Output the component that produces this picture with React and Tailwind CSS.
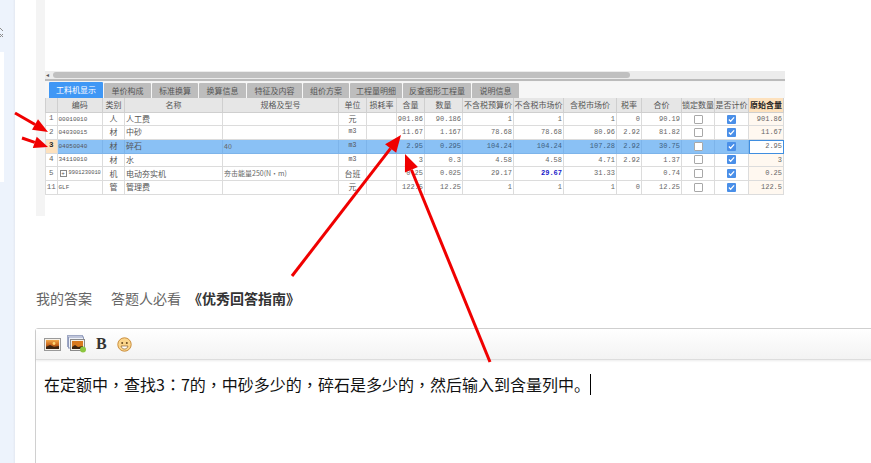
const cjk = { fontFamily: '"Noto Sans CJK SC", sans-serif' };
const tc = { fontFamily: '"Noto Sans CJK TC", sans-serif' };
const mono = { fontFamily: '"Liberation Mono", "Noto Sans CJK SC", monospace' };

const cols = "grid-cols-[12.5px_45.5px_22px_98px_116px_28px_30px_28px_38px_51px_50px_53px_25px_40px_33px_34px_35px]";

const tabs = ["单价构成", "标准换算", "换算信息", "特征及内容", "组价方案", "工程量明细", "反查图形工程量", "说明信息"];
const tabW = ["w-[47px]", "w-[46px]", "w-[47px]", "w-[55px]", "w-[46px]", "w-[52px]", "w-[68px]", "w-[47px]"];
const headers = ["", "编码", "类别", "名称", "规格及型号", "单位", "损耗率", "含量", "数量", "不含税预算价", "不含税市场价", "含税市场价", "税率", "合价", "锁定数量", "是否计价", "原始含量"];

const rows = [
  { no: "1", code: "00010010", type: "人", name: "人工费", spec: "", unit: "元", vals: ["", "901.86", "90.186", "1", "1", "1", "0", "90.19"], orig: "901.86", h: "h-[13px]" },
  { no: "2", code: "04030015", type: "材", name: "中砂", spec: "", unit: "m3", vals: ["", "11.67", "1.167", "78.68", "78.68", "80.96", "2.92", "81.82"], orig: "11.67", h: "h-[13.5px]" },
  { no: "3", code: "04050040", type: "材", name: "碎石", spec: "40", unit: "m3", vals: ["", "2.95", "0.295", "104.24", "104.24", "107.28", "2.92", "30.75"], orig: "2.95", h: "h-[14px]", sel: true },
  { no: "4", code: "34110010", type: "材", name: "水", spec: "", unit: "m3", vals: ["", "3", "0.3", "4.58", "4.58", "4.71", "2.92", "1.37"], orig: "3", h: "h-[13.5px]" },
  { no: "5", code: "9901230010", plus: true, type: "机", name: "电动夯实机", spec: "夯击能量250(N·m)", unit: "台班", vals: ["", "0.25", "0.025", "29.17", "29.67", "31.33", "", "0.74"], orig: "0.25", h: "h-[14px]" },
  { no: "11", code: "GLF", type: "管", name: "管理费", spec: "", unit: "元", vals: ["", "122.5", "12.25", "1", "1", "1", "0", "12.25"], orig: "122.5", h: "h-[13.5px]" },
];

function Check({ on }) {
  if (on)
    return (
      <span className="w-[9px] h-[9px] rounded-[1px] bg-[#4a8fe8] flex items-center justify-center">
        <svg width="7" height="7" viewBox="0 0 8 8"><path d="M1 4l2 2 4-4.5" fill="none" stroke="#fff" strokeWidth="1.4" /></svg>
      </span>
    );
  return <span className="w-[9px] h-[9px] rounded-[1px] border border-[#a8a8a8] bg-white" />;
}

function Row({ r }) {
  const line = r.sel ? "border-[#7db4ea]" : "border-[#dcdcdc]";
  const cell = `border-r border-b ${line} flex items-center overflow-hidden whitespace-nowrap`;
  const num = `${cell} justify-end pr-[1px] text-[7px] ${r.sel ? "text-[#3f5f80]" : "text-[#666]"}`;
  return (
    <div className={`grid ${cols} ${r.h} ${r.sel ? "bg-[#8ac1f5]" : "bg-white"}`}>
      <div className={`${cell} justify-center text-[7.5px] border-l ${r.sel ? "bg-[#fde1bd] text-[#222] font-bold border-[#dcdcdc]" : "bg-white text-[#666]"}`} style={mono}>{r.no}</div>
      <div className={`${cell} pl-[1px] gap-[2px] text-[#555] ${r.plus ? "text-[5.4px]" : "text-[6px]"}`} style={mono}>
        {r.plus && <span className="w-[7px] h-[7px] border border-[#888] flex items-center justify-center text-[6px] leading-none shrink-0 ml-[1px]">+</span>}
        {r.code}
      </div>
      <div className={`${cell} justify-center text-[8px] text-[#555]`} style={cjk}>{r.type}</div>
      <div className={`${cell} pl-[1px] text-[8px] text-[#555]`} style={cjk}>{r.name}</div>
      <div className={`${cell} pl-[1px] text-[7px] text-[#666]`} style={cjk}>{r.spec}</div>
      <div className={`${cell} justify-center text-[#555] ${r.unit === "m3" ? "text-[6.5px]" : "text-[8px]"}`} style={r.unit === "m3" ? mono : cjk}>{r.unit}</div>
      {r.vals.map((v, i) => (
        <div key={i} className={`${num} ${v === "29.67" ? "!text-[#1616c8] font-bold" : ""}`} style={mono}>{v}</div>
      ))}
      <div className={`${cell} justify-center`}><Check /></div>
      <div className={`${cell} justify-center`}><Check on /></div>
      <div
        className={`flex items-center justify-end pr-[1px] text-[7px] text-[#666] whitespace-nowrap overflow-hidden ${
          r.sel ? "bg-white border border-[#3f8ee0]" : "bg-[#fff8f0] border-r border-b border-[#dcdcdc]"
        }`}
        style={mono}
      >
        {r.orig}
      </div>
    </div>
  );
}

function Picture() {
  return (
    <svg width="17" height="13" viewBox="0 0 17 13">
      <defs>
        <linearGradient id="ph" x1="0" y1="0" x2="0" y2="1">
          <stop offset="0" stopColor="#f3a94a" />
          <stop offset="0.55" stopColor="#c9651a" />
          <stop offset="1" stopColor="#5b2e12" />
        </linearGradient>
      </defs>
      <rect x="0.5" y="0.5" width="16" height="12" fill="#f5f0e8" stroke="#9a9a9a" />
      <rect x="2" y="2" width="13" height="9" fill="url(#ph)" />
      <path d="M2 9l4-2 4 2 5-1v3H2z" fill="#3d2412" />
      <circle cx="10" cy="5.500" r="1.400" fill="#ffd977" />
    </svg>
  );
}

function Gallery() {
  return (
    <svg width="20" height="18" viewBox="0 0 20 18">
      <rect x="0.5" y="0.5" width="15" height="11" fill="#eef1f8" stroke="#9fa8c4" />
      <rect x="1.5" y="2" width="15" height="11" fill="#eef1f8" stroke="#8f9abb" />
      <rect x="3.5" y="4.500" width="14" height="11" fill="#f5f0e8" stroke="#8a8a8a" />
      <rect x="5" y="6" width="11" height="8" fill="#d9791f" />
      <path d="M5 12l3-2 3 2 5-1v3H5z" fill="#3d2412" />
      <circle cx="16" cy="14.500" r="3" fill="#8cc63f" />
    </svg>
  );
}

function Smile() {
  return (
    <svg width="15" height="15" viewBox="0 0 15 15">
      <circle cx="7.5" cy="7.5" r="6.700" fill="#fbd58b" stroke="#c98e3f" />
      <circle cx="5.2" cy="6" r="1" fill="#6b4a1e" />
      <circle cx="9.8" cy="6" r="1" fill="#6b4a1e" />
      <path d="M4 9h7c-.5 2-2 3-3.500 3S4.500 11 4 9z" fill="#fff" stroke="#8a5f28" strokeWidth="0.7" />
    </svg>
  );
}

function Arrow({ x1, y1, x2, y2, w = 3, head = 16, hw = 7 }) {
  const dx = x2 - x1, dy = y2 - y1, l = Math.hypot(dx, dy), ux = dx / l, uy = dy / l;
  const bx = x2 - ux * head, by = y2 - uy * head;
  const nx = -uy * hw, ny = ux * hw;
  return (
    <g>
      <line x1={x1} y1={y1} x2={bx} y2={by} stroke="#f00000" strokeWidth={w} />
      <polygon points={`${x2},${y2} ${bx + nx},${by + ny} ${bx - nx},${by - ny}`} fill="#f00000" />
    </g>
  );
}

function P({ children }) {
  return <span style={tc}>{children}</span>;
}

export default function App() {
  return (
    <div className="relative w-[871px] h-[463px] overflow-hidden bg-white flex" style={cjk}>
      {/* left page gutter */}
      <div className="w-[15px] h-full bg-[linear-gradient(90deg,#edf3fc_85%,#e4e9f2)] shrink-0 pt-[27px]">
        <svg className="block" width="4" height="11" viewBox="0 0 4 11">
          <path d="M0 1l3 3M0 7l3 3M3 7l-3 3" fill="none" stroke="#8c8c8c" strokeWidth="1" />
        </svg>
        <div className="w-[4px] h-[130px] bg-white mt-[14px]" />
      </div>

      <div className="flex-1 min-w-0 pl-[20px] flex flex-col">
        {/* pasted screenshot */}
        <div className="h-[216px] w-[750px] shrink-0 flex pl-[1px]">
          <div className="w-[9px] bg-[#f4f4f4] shrink-0" />
          <div className="w-[740px] bg-white flex flex-col pt-[71px]">
            {/* scrollbar */}
            <div className="h-[8px] w-[740px] bg-[#ececec] flex items-center pl-[1px]">
              <span className="text-[6px] leading-none text-[#555] w-[7px]">◂</span>
              <div className="h-[6px] w-[577px] rounded-[3px] bg-[#c0c0c0]" />
            </div>
            <div className="h-[3px] bg-[#bbbbbb] w-[740px] border-b border-[#f4f4f4]" />
            {/* tabs */}
            <div className="h-[16px] flex gap-[1px] items-end w-[740px] bg-[#f6f6f6] pl-[4px]">
              <div className="h-[16px] w-[54px] bg-[#3f97f5] text-white text-[8px] flex items-center justify-center rounded-t-[1px]">工料机显示</div>
              {tabs.map((t, i) => (
                <div key={t} className={`h-[15px] ${tabW[i]} bg-[#bdbdbd] text-[#555] text-[8px] flex items-center justify-center rounded-t-[1px] whitespace-nowrap`}>{t}</div>
              ))}
            </div>
            {/* header */}
            <div className={`grid ${cols} h-[15px] bg-[#e6e6e6] w-[739px]`}>
              {headers.map((h, i) => (
                <div
                  key={i}
                  className={`border-r border-b border-[#cfcfcf] flex items-center justify-center text-[8px] whitespace-nowrap overflow-hidden ${
                    i === 0 ? "border-l" : ""
                  } ${i === 16 ? "bg-[#fde1bd] text-[#222] font-bold" : "text-[#555]"}`}
                >
                  {h}
                </div>
              ))}
            </div>
            <div className="w-[739px]">
              {rows.map((r) => <Row key={r.no} r={r} />)}
            </div>
          </div>
        </div>

        {/* tip line */}
        <div className="mt-[73px] h-[18px] shrink-0 flex items-center text-[14px] text-[#666] whitespace-nowrap pl-[1px]">
          <span>我的答案</span>
          <span className="ml-[19px]">答题人必看</span>
          <span className="ml-[7px] text-[#333] font-bold">《优秀回答指南》</span>
        </div>

        {/* editor */}
        <div className="mt-[21px] w-[880px] h-[220px] shrink-0 rounded-t-[3px] border border-[#d0d0d0]">
          <div className="h-[31px] bg-[linear-gradient(180deg,#ffffff,#f3f3f3)] border-b border-[#dddddd] shadow-[0_1px_2px_rgba(0,0,0,0.08)] flex items-center pl-[8px]">
            <Picture />
            <span className="ml-[6px]"><Gallery /></span>
            <span className="ml-[9px] text-[16px] font-bold text-[#333] leading-none" style={{ fontFamily: '"Liberation Serif", serif' }}>B</span>
            <span className="ml-[10px]"><Smile /></span>
          </div>
          <div className="pl-[8px] pt-[13px] text-[16px] leading-[22px] text-[#111] flex items-center whitespace-nowrap">
            <span>
              在定额中<P>，</P>查找3<P>：</P>7的<P>，</P>中砂多少的<P>，</P>碎石是多少的<P>，</P>然后输入到含量列中。
            </span>
            <span className="inline-block w-[1px] h-[21px] bg-black" />
          </div>
        </div>
      </div>

      {/* annotation arrows */}
      <svg className="absolute left-0 top-0 pointer-events-none" width="871" height="463">
        <Arrow x1={15} y1={113} x2={48} y2={132} w={3} head={15} hw={6} />
        <Arrow x1={22} y1={138} x2={48} y2={147} w={3} head={14} hw={6} />
        <Arrow x1={292} y1={276} x2={401} y2={135} w={3} head={17} hw={7} />
        <Arrow x1={490} y1={362} x2={405} y2={154} w={3} head={17} hw={7} />
      </svg>
    </div>
  );
}
